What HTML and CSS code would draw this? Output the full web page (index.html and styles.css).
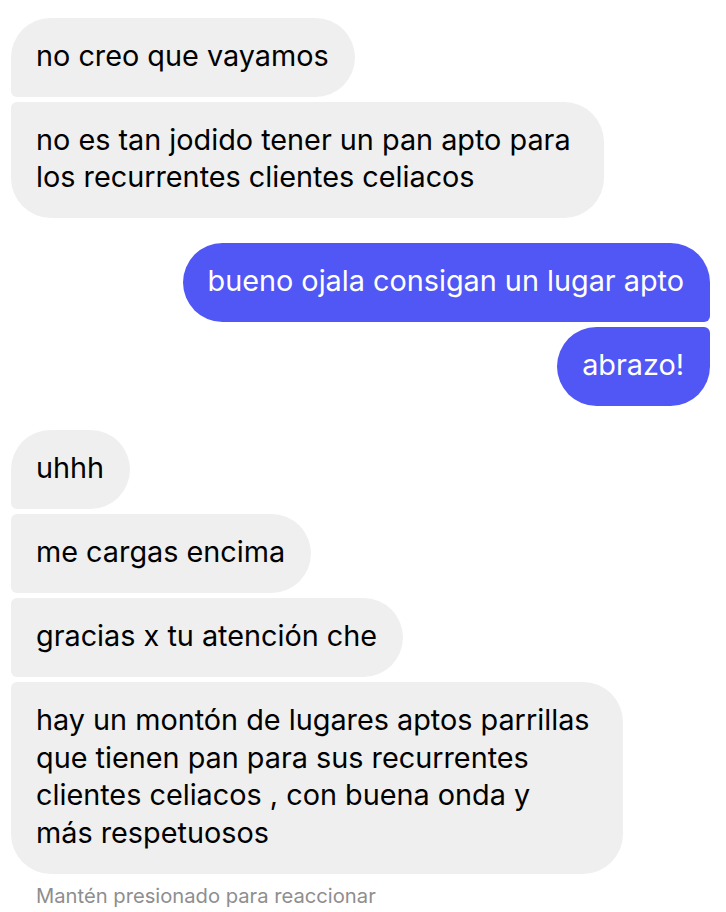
FILE: index.html
```html
<!DOCTYPE html>
<html lang="es">
<head>
<meta charset="utf-8">
<title>Chat</title>
<link rel="stylesheet" href="styles.css">
</head>
<body>
<main class="chat">
  <section class="group in">
    <div class="bubble first">no creo que vayamos</div>
    <div class="bubble last multi">no es tan jodido tener un pan apto para<br>los recurrentes clientes celiacos</div>
  </section>
  <section class="group out">
    <div class="bubble first">bueno ojala consigan un lugar apto</div>
    <div class="bubble last">abrazo!</div>
  </section>
  <section class="group in">
    <div class="bubble first">uhhh</div>
    <div class="bubble mid">me cargas encima</div>
    <div class="bubble mid">gracias x tu atención che</div>
    <div class="bubble last multi">hay un montón de lugares aptos parrillas<br>que tienen pan para sus recurrentes<br>clientes celiacos , con buena onda y<br>más respetuosos</div>
  </section>
  <p class="hint">Mantén presionado para reaccionar</p>
</main>
</body>
</html>
```
FILE: styles.css
```css
html, body {
  margin: 0;
  padding: 0;
  background: #ffffff;
}
.chat {
  padding: 18px 16px 0 11px;
  display: flex;
  flex-direction: column;
  gap: 24.5px;
  font-family: Inter, "Liberation Sans", sans-serif;
}
.group {
  display: flex;
  flex-direction: column;
  gap: 5px;
}
.group.in { align-items: flex-start; }
.group.out { align-items: flex-end; }
.bubble {
  font-size: 28.8px;
  line-height: 37.4px;
  padding: 19px 26px 22.6px 25px;
  border-radius: 40px;
  white-space: nowrap;
}
.bubble.multi { padding-right: 33px; }
.in .bubble {
  background: #efefef;
  color: #000000;
}
.out .bubble {
  background: #5157f5;
  color: #ffffff;
}
.in .first { border-bottom-left-radius: 6px; }
.in .mid { border-top-left-radius: 6px; border-bottom-left-radius: 6px; }
.in .last { border-top-left-radius: 6px; }
.out .first { border-bottom-right-radius: 6px; }
.out .last { border-top-right-radius: 6px; }
.hint {
  margin: -14px 0 0 25px;
  font-size: 20.2px;
  line-height: 24px;
  color: #8e8e8e;
}
```
